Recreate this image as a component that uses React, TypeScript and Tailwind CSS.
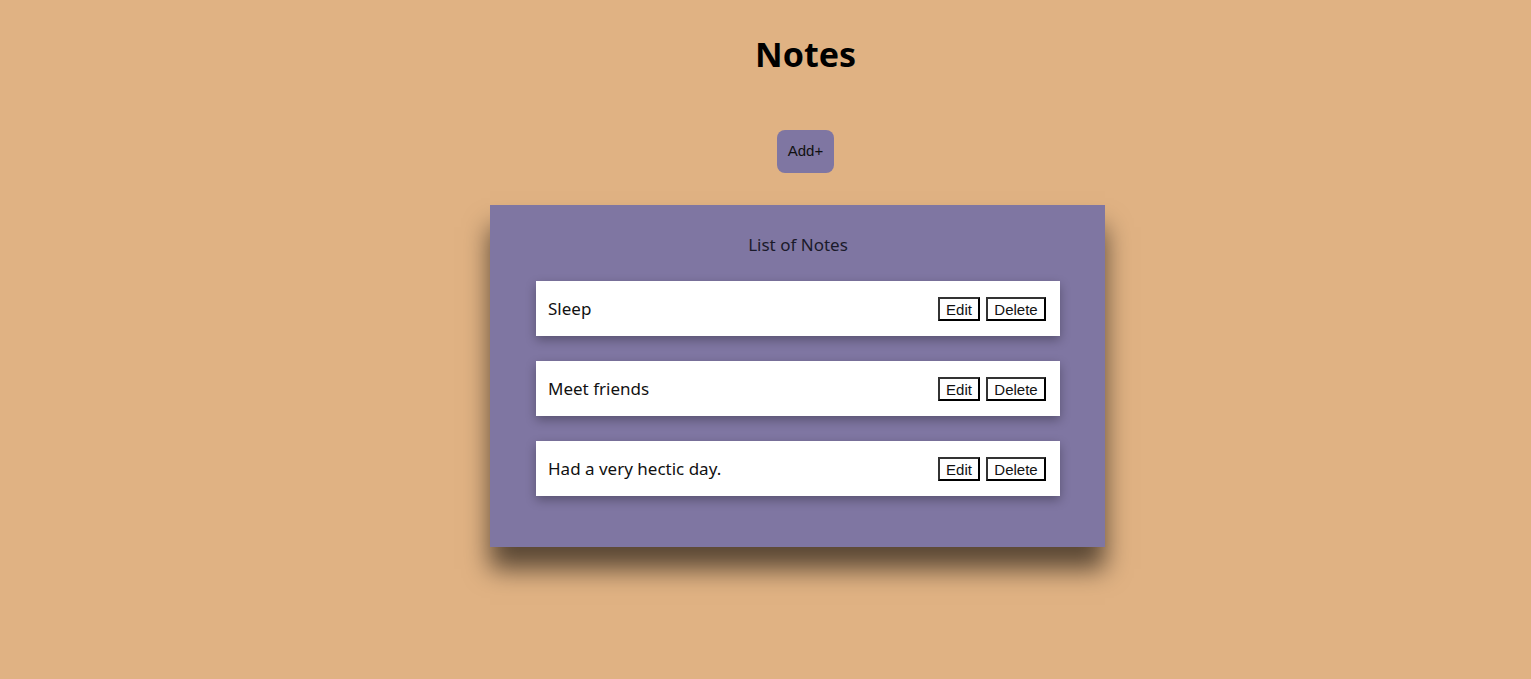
import React from "react";

const notes = ["Sleep", "Meet friends", "Had a very hectic day."];

export default function App() {
  return (
    <div className="min-h-[679px] bg-[#e0b283] text-[#111] font-['Noto_Sans',sans-serif]">
      <div className="flex flex-col items-center pl-[80px] pt-[28px]">
        <h1 className="text-[34px] leading-[52px] font-bold text-black">Notes</h1>

        <button className="mt-[50px] h-[43px] w-[57px] rounded-[8px] bg-[#7f76a2] font-['Liberation_Sans',sans-serif] text-[15px] text-[#111]">
          Add+
        </button>
      </div>

      <div className="flex justify-center pl-[64px] mt-[32px]">
        <div className="w-[615px] bg-[#7f76a2] pl-[46px] pr-[45px] pt-[28px] pb-[51px] shadow-[0_22px_24px_rgba(0,0,0,0.6)]">
          <h2 className="text-center text-[17px] leading-[24px] text-[#1a1a2a]">List of Notes</h2>

          <ul className="mt-[24px] flex flex-col gap-[25px]">
            {notes.map((note) => (
              <li
                key={note}
                className="flex h-[55px] items-center justify-between bg-white pl-[12px] pr-[14px] shadow-[0_4px_10px_rgba(0,0,0,0.3)]"
              >
                <span className="text-[17px] text-[#111]">{note}</span>
                <div className="flex gap-[6px] font-['Liberation_Sans',sans-serif] text-[15px]">
                  <button className="h-[24px] w-[42px] border-2 border-t-[#333] border-l-[#333] border-r-black border-b-black bg-white">
                    Edit
                  </button>
                  <button className="h-[24px] w-[60px] border-2 border-t-[#333] border-l-[#333] border-r-black border-b-black bg-white">
                    Delete
                  </button>
                </div>
              </li>
            ))}
          </ul>
        </div>
      </div>
    </div>
  );
}
